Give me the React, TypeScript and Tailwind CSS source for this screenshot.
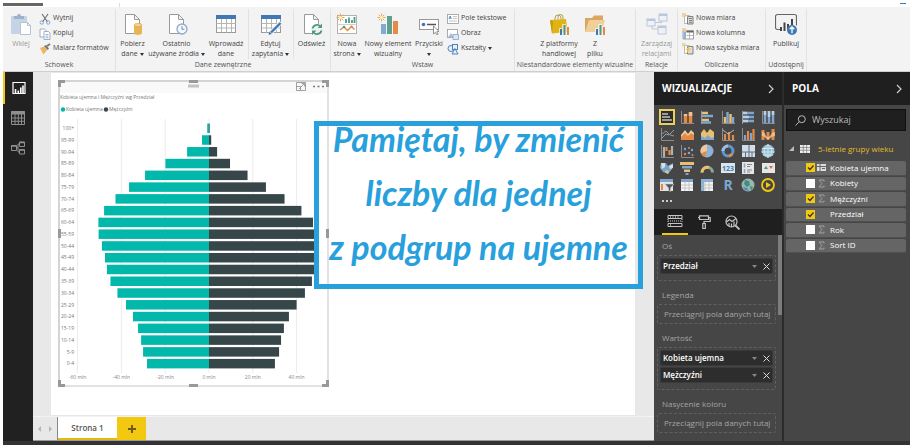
import React from 'react';

const BLUE = '#3f78b5';
const SKY = '#7ea6d0';
const ORANGE = '#e58a45';
const TEAL = '#4f9a85';
const SAND = '#e9bf72';

interface AgeGroup {
    label: string;
    women: number;
    men: number;
}

const ageGroups: AgeGroup[] = [
    { label: '100+', women: 0.8, men: 0.3 },
    { label: '95-99', women: 3.2, men: 1 },
    { label: '90-94', women: 10, men: 3.7 },
    { label: '85-89', women: 19.9, men: 9.6 },
    { label: '80-84', women: 29.2, men: 17.6 },
    { label: '75-79', women: 36.5, men: 26 },
    { label: '70-74', women: 42.7, men: 34.5 },
    { label: '65-69', women: 47.9, men: 42.2 },
    { label: '60-64', women: 50.5, men: 47.5 },
    { label: '55-59', women: 50.4, men: 49 },
    { label: '50-44', women: 48.9, men: 49 },
    { label: '45-49', women: 47.5, men: 49 },
    { label: '40-44', women: 46.6, men: 48.5 },
    { label: '35-39', women: 45, men: 47 },
    { label: '30-34', women: 41.8, men: 43.8 },
    { label: '25-29', women: 37.9, men: 40 },
    { label: '20-24', women: 34.7, men: 36.5 },
    { label: '15-19', women: 32.4, men: 34.2 },
    { label: '10-14', women: 31, men: 32.9 },
    { label: '5-9', women: 30.1, men: 32 },
    { label: '0-4', women: 28.3, men: 30.1 },
];

/* Ribbon icons, all drawn on a 22x22 grid */

const Sun = () => (
    <g stroke="#e6a94e" strokeWidth="1">
        <path d="M4.5 0.5v8M0.5 4.5h8M1.7 1.7l5.6 5.6M7.3 1.7L1.7 7.3" />
        <circle cx="4.5" cy="4.5" r="1.6" fill="#fff3d8" stroke="none" />
    </g>
);

const PageShape = () => <path d="M3.5 1.5h9l5 5v14h-14zM12.5 1.5v5h5" fill="#fff" stroke="#9a9a9a" />;

const TableShape = () => (
    <g>
        <rect x="1.5" y="2.5" width="19" height="17" fill="#fff" stroke="#9a9a9a" />
        <rect x="1" y="2" width="20" height="4" fill={BLUE} />
        <path d="M1.5 10.5h19M1.5 15h19M6.5 6v13.5M11.5 6v13.5M16.5 6v13.5" stroke="#b5b5b5" />
    </g>
);

const MiniBars = () => (
    <g>
        <rect x="12" y="16" width="2" height="6" fill={BLUE} />
        <rect x="15.5" y="12" width="2" height="10" fill={TEAL} />
        <rect x="19" y="14" width="2" height="8" fill={ORANGE} />
    </g>
);

const ribbonIcons: Record<string, React.ReactNode> = {
    paste: (
        <g>
            <rect x="1" y="3" width="16" height="18" rx="1" fill="#c5d3e6" />
            <path d="M4 6V3h3a2 2 0 0 1 4 0h3v3z" fill="#9db1cd" />
            <path d="M10.5 9.5h7l3 3v9h-10zM17.5 9.5v3h3" fill="#fff" stroke="#b8c3d2" />
        </g>
    ),
    getData: (
        <g>
            <PageShape />
            <path d="M12 12v8c0 2.6 8 2.6 8 0v-8z" fill="#e8b555" />
            <ellipse cx="16" cy="12" rx="4" ry="1.6" fill="#f5d48c" stroke="#d99f3d" strokeWidth="0.6" />
        </g>
    ),
    recent: (
        <g>
            <PageShape />
            <circle cx="16" cy="16" r="5" fill="#f6f9fc" stroke="#8fa9c8" strokeWidth="1.3" />
            <path d="M16 13v3.3h2.5" stroke="#6b8fb8" fill="none" />
        </g>
    ),
    enter: <TableShape />,
    edit: (
        <g>
            <TableShape />
            <path d="M10 20.5L21 9.5" stroke="#f3f3f3" strokeWidth="4" />
            <path d="M11 19.5L20.5 10" stroke={BLUE} strokeWidth="2.4" />
            <path d="M8.5 21.8l1-3 2.2 2.1z" fill="#38639a" />
        </g>
    ),
    refresh: (
        <g>
            <PageShape />
            <circle cx="16" cy="16.5" r="6" fill="#f3f3f3" />
            <path d="M11.5 15.5a4.6 4.6 0 0 1 8-2M20.5 17.5a4.6 4.6 0 0 1-8 2" stroke={TEAL} strokeWidth="1.8" fill="none" />
            <path d="M21 10.5v4.5h-4.5zM11 22v-4.500h4.5z" fill={TEAL} />
        </g>
    ),
    newPage: (
        <g>
            <rect x="1.5" y="2.5" width="19" height="18" fill="#fff" stroke="#b2b2b2" />
            <path d="M1.5 11.5h19" stroke="#d0d0d0" />
            <path d="M10 10V6M13 10V4.5M16 10V7M18.5 10V4" stroke={TEAL} strokeWidth="1.8" />
            <path d="M4 17l4-3 3.5 3.5 4-4 3 3" stroke={ORANGE} strokeWidth="1.5" fill="none" />
            <circle cx="8" cy="14" r="1.3" fill={TEAL} />
            <circle cx="15.5" cy="13.7" r="1.3" fill={ORANGE} />
            <Sun />
        </g>
    ),
    newVisual: (
        <g>
            <rect x="4" y="11" width="5" height="10" fill="#82abd0" />
            <rect x="10" y="3" width="5" height="18" fill="#60a08f" />
            <rect x="16" y="8" width="5" height="13" fill="#e58b49" />
            <Sun />
        </g>
    ),
    buttons: (
        <g>
            <rect x="1.5" y="6.5" width="19" height="10" fill="#fff" stroke="#999" />
            <circle cx="5.5" cy="11.5" r="1.8" fill={BLUE} />
            <path d="M9 11.5h9" stroke="#555" strokeWidth="1.5" />
            <path d="M15.5 13v8l2-1.700 1.300 2.500 1.300-.7-1.300-2.400 2.200-.3z" fill="#fff" stroke="#777" strokeWidth="0.8" />
        </g>
    ),
    market: (
        <g>
            <path d="M7 8V5a3 3 0 0 1 6 0v3M10 6.5V4a2.500 2.500 0 0 1 5 0v3" stroke="#b5a052" fill="none" />
            <path d="M2 7l16-1 1.500 13-15.500 1.500z" fill="#dfb413" />
            <path d="M2 7l3 1.500L4 20.500z" fill="#c39b0c" />
            <path d="M11 15h3v-4h4v2h4v9H11z" fill="#f3f3f3" opacity="0.7" />
            <MiniBars />
        </g>
    ),
    file: (
        <g>
            <path d="M1 19V5h7l2-2.500h9V19z" fill="#d9a760" />
            <path d="M5 7h16l-3.500 12H1z" fill="#f2cf99" />
            <path d="M11 15h3v-4h4v2h4v9H11z" fill="#f3f3f3" opacity="0.8" />
            <MiniBars />
        </g>
    ),
    relations: (
        <g fill="#eef2f7" stroke="#b9c8dc">
            <path d="M6 6v10h7M8 9.5h8V6" fill="none" stroke="#c7c7c7" />
            <rect x="13" y="1" width="8" height="7" />
            <path d="M13 2h8" strokeWidth="2" />
            <rect x="1" y="6" width="8" height="7" />
            <path d="M1 7h8" strokeWidth="2" />
            <rect x="12" y="13" width="8" height="8" />
            <path d="M12 14h8" strokeWidth="2" />
        </g>
    ),
    publish: (
        <g>
            <path d="M5 16.5H2.500a2 2 0 0 1-2-2v-11a2 2 0 0 1 2-2h17a2 2 0 0 1 2 2v9" fill="none" stroke="#666" strokeWidth="1.2" />
            <path d="M6 18v-4M9.5 18V9.5M13 16v-5M17 12V6" stroke="#444" strokeWidth="2" />
            <circle cx="17" cy="17" r="5" fill={BLUE} />
            <path d="M17 20.300v-6M14.700 16.300L17 14l2.300 2.300" stroke="#fff" strokeWidth="1.3" fill="none" />
        </g>
    ),
};

/* Small ribbon icons on a 12x12 grid */
const smallIcons: Record<string, React.ReactNode> = {
    cut: (
        <g fill="none">
            <path d="M3 1l5.500 8M9 1L3.500 9" stroke="#6e6e6e" strokeWidth="1.1" />
            <circle cx="2.8" cy="9.5" r="1.7" stroke={SKY} />
            <circle cx="9.2" cy="9.5" r="1.7" stroke={SKY} />
        </g>
    ),
    copy: (
        <g fill="#fff" stroke="#8b9cb5" strokeWidth="0.8">
            <path d="M1 1h4.500l1.500 1.500V9H1z" />
            <path d="M5 3.500h4.500L11 5v6.500H5z" />
            <path d="M6.500 6.500h3M6.500 8.200h3M6.500 9.800h3" stroke={SKY} />
        </g>
    ),
    painter: (
        <g>
            <path d="M1 5l4-1.500L8 7l-3.500 4.500z" fill="#f0b35f" />
            <path d="M5 3l2-1 3 3.500-1.500 1.500z" fill="#777" />
            <path d="M8 3l3-2" stroke="#777" strokeWidth="1.8" />
        </g>
    ),
    textBox: (
        <g>
            <rect x="0.5" y="1.5" width="11" height="9" fill="#fff" stroke="#999" strokeWidth="0.8" />
            <path d="M2 6l1.200-3 1.200 3M2.400 5h1.600" stroke={BLUE} strokeWidth="0.8" fill="none" />
            <path d="M6 3.500h4M6 5.500h4M2 8h8" stroke="#aaa" strokeWidth="0.7" />
        </g>
    ),
    image: (
        <g>
            <rect x="0.5" y="1.5" width="10" height="8" fill="#fff" stroke="#999" strokeWidth="0.8" />
            <path d="M1 9l3-4 2.500 3L8 6l2.500 3z" fill="#a9c2dd" />
            <path d="M6 6.500h5.500v5H6z" fill="#dce7f3" stroke={SKY} strokeWidth="0.8" />
        </g>
    ),
    shapes: (
        <g fill="#e7eff8" stroke={BLUE} strokeWidth="0.9">
            <circle cx="4" cy="5.5" r="3" />
            <rect x="5.5" y="1.5" width="5" height="5" />
            <path d="M8 5.500l3 5.500H5z" />
        </g>
    ),
    measure: (
        <g>
            <path d="M2.500 2.500h5v8h-5z" fill="#fff" stroke="#aaa" strokeWidth="0.8" />
            <path d="M5.500 3.500h5.500v7.500H5.500z" fill="#ddd" stroke="#777" strokeWidth="0.9" />
            <path d="M6.500 5.500h3.500M7 7.500h3M7 9.300h3" stroke="#777" strokeWidth="0.9" />
            <path d="M0 0h4v4H0z" fill="#f0c98b" opacity="0.8" />
        </g>
    ),
    column: (
        <g>
            <path d="M1 3h10.500v8H1z" fill="#fff" stroke="#888" strokeWidth="0.8" />
            <path d="M4.500 2.500h7v2h-7z" fill="#666" />
            <path d="M1.500 4h2.500v7H1.500z" fill="#8cb0d6" />
            <path d="M7.500 4v7M4.500 7.500h7" stroke="#aaa" strokeWidth="0.8" />
            <path d="M0 0h4v3.500H0z" fill="#f0c98b" opacity="0.8" />
        </g>
    ),
    quick: (
        <g>
            <path d="M2.500 2.500h5v8h-5z" fill="#fff" stroke="#aaa" strokeWidth="0.8" />
            <path d="M5.500 3.500h5.500v7.500H5.500z" fill="#ddd" stroke="#777" strokeWidth="0.9" />
            <path d="M8 2L3.500 7h2L4 11l5-5.500H6.800z" fill="#f2bf52" />
            <path d="M0 0h3.500v3.500H0z" fill="#f0c98b" opacity="0.8" />
        </g>
    ),
};

const Arrow = () => (
    <svg viewBox="0 0 4 3" className="w-1 h-[3px] fill-[#333]" aria-hidden="true">
        <path d="M0 0h4L2 3z" />
    </svg>
);

interface BigButtonProps {
    icon: string;
    lines: string[];
    width: string;
    arrow?: boolean;
    faded?: boolean;
}

const BigButton = ({ icon, lines, width, arrow, faded }: BigButtonProps) => (
    <button type="button" className={`flex flex-col items-center shrink-0 pt-1 ${width} ${faded ? 'text-[#999]' : 'text-[#444]'}`}>
        <svg viewBox="0 0 22 22" className="w-[22px] h-[22px] mb-1" aria-hidden="true">{ribbonIcons[icon]}</svg>
        {lines.map((line, i) => (
            <span key={line} className="h-2.5 leading-[10px] whitespace-nowrap flex items-center gap-0.5">
                {line}
                {arrow && i === lines.length - 1 && <Arrow />}
            </span>
        ))}
    </button>
);

const SmallButton = ({ icon, label, arrow }: { icon: string; label: string; arrow?: boolean }) => (
    <button type="button" className="flex items-center gap-0.5 h-[15px] whitespace-nowrap text-[#444]">
        <svg viewBox="0 0 12 12" className="w-3 h-3 shrink-0" aria-hidden="true">{smallIcons[icon]}</svg>
        {label}
        {arrow && <Arrow />}
    </button>
);

const Group = ({ title, width, children }: { title: string; width: string; children: React.ReactNode }) => (
    <section className={`flex flex-col shrink-0 border-r border-[#e2e2e2] ${width}`}>
        <div className="flex justify-center h-[52px]">{children}</div>
        <h2 className="text-center leading-[12px] whitespace-nowrap text-[#555]">{title}</h2>
    </section>
);

const Ribbon = () => (
    <header className="shrink-0">
        <div className="flex h-1 bg-white">
            <div className="w-10 h-[3px] bg-[#666]" />
            <div className="w-[77px] border-r border-[#ddd]" />
            <div className="w-1.5 h-px ml-auto mr-1 bg-[#3f78b5]" />
        </div>
        <div className="flex h-[65px] bg-[#f3f3f3] border-b border-[#cfcfcf] pt-0.5 text-[7px] overflow-hidden">
            <Group title="Schowek" width="w-[113px]">
                <BigButton icon="paste" lines={['Wklej']} width="w-[36px]" faded />
                <div className="flex flex-col flex-1 pt-0.5">
                    <SmallButton icon="cut" label="Wytnij" />
                    <SmallButton icon="copy" label="Kopiuj" />
                    <SmallButton icon="painter" label="Malarz formatów" />
                </div>
            </Group>
            <Group title="Dane zewnętrzne" width="w-[215px]">
                <BigButton icon="getData" lines={['Pobierz', 'dane']} width="w-8" arrow />
                <BigButton icon="recent" lines={['Ostatnio', 'używane źródła']} width="w-14" arrow />
                <BigButton icon="enter" lines={['Wprowadź', 'dane']} width="w-[43px]" />
                <div className="border-x border-[#e2e2e2]">
                    <BigButton icon="edit" lines={['Edytuj', 'zapytania']} width="w-[44px]" arrow />
                </div>
                <BigButton icon="refresh" lines={['Odśwież']} width="w-9" />
            </Group>
            <Group title="Wstaw" width="w-[184px]">
                <BigButton icon="newPage" lines={['Nowa', 'strona']} width="w-8" arrow />
                <BigButton icon="newVisual" lines={['Nowy element', 'wizualny']} width="w-[50px]" />
                <BigButton icon="buttons" lines={['Przyciski', '']} width="w-8" arrow />
                <div className="flex flex-col flex-1 pt-0.5 pl-0.5">
                    <SmallButton icon="textBox" label="Pole tekstowe" />
                    <SmallButton icon="image" label="Obraz" />
                    <SmallButton icon="shapes" label="Kształty" arrow />
                </div>
            </Group>
            <Group title="Niestandardowe elementy wizualne" width="w-[121px]">
                <BigButton icon="market" lines={['Z platformy', 'handlowej']} width="w-10" />
                <BigButton icon="file" lines={['Z', 'pliku']} width="w-8" />
            </Group>
            <Group title="Relacje" width="w-[42px]">
                <BigButton icon="relations" lines={['Zarządzaj', 'relacjami']} width="w-10" faded />
            </Group>
            <Group title="Obliczenia" width="w-[88px]">
                <div className="flex flex-col flex-1 pt-0.5 pl-1">
                    <SmallButton icon="measure" label="Nowa miara" />
                    <SmallButton icon="column" label="Nowa kolumna" />
                    <SmallButton icon="quick" label="Nowa szybka miara" />
                </div>
            </Group>
            <Group title="Udostępnij" width="w-[41px]">
                <BigButton icon="publish" lines={['Publikuj']} width="w-9" />
            </Group>
        </div>
    </header>
);

const SideRail = () => (
    <nav className="flex flex-col w-[30px] shrink-0 bg-[#212121]" aria-label="Widoki">
        <button type="button" className="flex items-center justify-center h-8 border-l-2 border-[#f2c811]" aria-label="Raport">
            <svg viewBox="0 0 14 14" className="w-3.5 h-3.5" fill="none" stroke="#fff">
                <path d="M1 12.500V1.500h12v11z" strokeWidth="1.2" />
                <path d="M3.500 12V8M6.300 12V9.500M8.800 12V6.500M11 12V4.500" strokeWidth="1.6" />
            </svg>
        </button>
        <button type="button" className="flex items-center justify-center h-7" aria-label="Dane">
            <svg viewBox="0 0 14 14" className="w-3.5 h-3.5" fill="none" stroke="#8f8f8f">
                <path d="M0.500 0.500h13v13h-13zM0.500 7h13M0.500 10.300h13M4 3v10.500M7.300 3v10.500M10.500 3v10.500" />
                <path d="M0 2h14" strokeWidth="3" />
            </svg>
        </button>
        <button type="button" className="flex items-center justify-center h-8" aria-label="Relacje">
            <svg viewBox="0 0 14 14" className="w-3.5 h-3.5" fill="none" stroke="#8f8f8f">
                <path d="M0.500 4.500h5v5h-5zM8.500 1h5v4.500h-5zM8.500 8.500h5V13h-5zM5.500 6.500h1.500V3h1.500M7 6.500V11h1.500" />
                <path d="M0.500 5h5M8.500 1.500h5M8.500 9h5" strokeWidth="1.5" />
            </svg>
        </button>
    </nav>
);

const PyramidChart = () => {
    const zero = 151;
    const unit = 2.19;
    const top = 44;
    const step = 11.77;
    return (
        <svg viewBox="0 0 271 307" className="w-[271px] h-[307px] block" role="img" aria-label="Piramida wieku">
            <rect x="1" y="1" width="268" height="12" fill="#f9f9f9" />
            <path d="M1 1h269" stroke="#d4d4d4" strokeWidth="2" />
            <path d="M1 0v306" stroke="#c6c6c6" strokeWidth="1.5" />
            <path d="M270 1v305H1" stroke="#e2e2e2" strokeWidth="2" fill="none" />
            <path d="M1.500 7V1.500H7M264 1.500h5.500V7M1.500 300v5.500H7M264 305.500h5.500V300" stroke="#999" strokeWidth="3" fill="none" />
            <path d="M131 1.500h9M131 305.500h9M1.500 149v9M269.500 149v9" stroke="#999" strokeWidth="3" />
            <path d="M130 6h11" stroke="#c2c2c2" strokeWidth="3" />
            {/* focus mode + more options */}
            <path d="M238.500 2.500h9v8h-9zM241 9l5-5M243.500 3.500h3v3M238.500 6.500h4v4" stroke="#8a8a8a" fill="none" strokeWidth="0.8" />
            <path d="M255 6.500h2M259.500 6.500h2M264 6.500h2" stroke="#777" strokeWidth="1.5" />
            <text x="2" y="19" className="text-[5px] fill-[#777]">Kobieta ujemna i Mężczyźni wg Przedział</text>
            <circle cx="5" cy="29.5" r="2.2" fill="#01b8aa" />
            <text x="8" y="31" className="text-[5px] fill-[#777]">Kobieta ujemna</text>
            <circle cx="48" cy="29.5" r="2.2" fill="#374649" />
            <text x="51" y="31" className="text-[5px] fill-[#777]">Mężczyźni</text>
            {[-60, -40, -20, 0, 20, 40].map((tick) => (
                <g key={tick}>
                    <path d={`M${zero + tick * unit} 39v254`} stroke="#ececec" />
                    <text x={zero + tick * unit} y="299" textAnchor="middle" className="text-[5px] fill-[#888]">{`${tick} mln`}</text>
                </g>
            ))}
            {ageGroups.map((g, i) => (
                <g key={g.label}>
                    <text x="16" y={top + i * step + 6} textAnchor="end" className="text-[5px] fill-[#777]">{g.label}</text>
                    <rect x={zero - g.women * unit} y={top + i * step - 0.5} width={g.women * unit} height="9.5" fill="#01b8aa" />
                    <rect x={zero} y={top + i * step - 0.5} width={g.men * unit} height="9.5" fill="#374649" />
                </g>
            ))}
        </svg>
    );
};

const Canvas = () => (
    <main className="flex flex-col flex-1 min-w-0 bg-[#e8e8e8]">
        <div className="relative flex-1 ml-[18px] mr-[19px] mt-px bg-white pl-[7px] pt-[7px]">
            <PyramidChart />
            <p className="absolute left-[263px] top-[48px] w-[329px] h-[168px] border-5 border-[#27a0dc] text-[#27a0dc] font-['Lato'] font-bold italic text-[34px] leading-[54px] text-center whitespace-nowrap">
                <span className="block -mt-3.5">Pamiętaj, by zmienić</span>
                <span className="block">liczby dla jednej</span>
                <span className="block">z podgrup na ujemne</span>
            </p>
        </div>
        <div className="flex h-[25px] shrink-0 mt-px text-[8px] border-t border-[#f3f3f3] border-b border-b-[#999]">
            <div className="flex items-center justify-center gap-2 w-[25px] border-r border-[#888]">
                <svg viewBox="0 0 3 6" className="w-[3px] h-1.5 fill-[#b5b5b5]"><path d="M3 0v6L0 3z" /></svg>
                <svg viewBox="0 0 3 6" className="w-[3px] h-1.5 fill-[#b5b5b5]"><path d="M0 0v6l3-3z" /></svg>
            </div>
            <button type="button" className="w-[59px] bg-white border-b-2 border-[#e8b90a] text-[#555] font-semibold">Strona 1</button>
            <button type="button" className="flex items-center justify-center w-[29px] bg-[#f2c811]" aria-label="Nowa strona">
                <svg viewBox="0 0 8 8" className="w-2 h-2" stroke="#6b5b1c" strokeWidth="2"><path d="M4 0v8M0 4h8" /></svg>
            </button>
        </div>
    </main>
);

/* Visual gallery icons on a 14x14 grid */
const Axis = () => <path d="M1.500 1v12.500H14" stroke="#8d8d8d" fill="none" />;

const galleryIcons: { name: string; art: React.ReactNode }[] = [
    { name: 'Skumulowany słupkowy', art: <path d="M2 4h6M2 7h8M2 10h10" stroke="#9a9a9a" strokeWidth="2" /> },
    { name: 'Skumulowany kolumnowy', art: <g><Axis /><path d="M5.500 13V6M10.500 13V3" stroke={ORANGE} strokeWidth="3.5" /><path d="M5.500 6V4M10.500 6V2" stroke="#f2c08f" strokeWidth="3.5" /></g> },
    { name: 'Grupowany słupkowy', art: <g><path d="M1.500 1v13" stroke="#999" /><path d="M2 3h6M2 10h7" stroke={SAND} strokeWidth="2.5" /><path d="M2 6h11M2 12.500h9" stroke={SKY} strokeWidth="2.5" /></g> },
    { name: 'Grupowany kolumnowy', art: <g><Axis /><path d="M4 13V7M9.500 13V4" stroke={SAND} strokeWidth="2.5" /><path d="M6.500 13V2M12 13V7" stroke={SKY} strokeWidth="2.5" /></g> },
    { name: 'Słupkowy 100%', art: <g><path d="M1.500 1v13" stroke="#999" /><path d="M2 3h11M2 7h11M2 11h11" stroke={SKY} strokeWidth="2.5" /><path d="M2 3h4M2 7h6M2 11h5" stroke="#b8cfe6" strokeWidth="2.5" /></g> },
    { name: 'Kolumnowy 100%', art: <g><Axis /><path d="M4 13V1M8 13V1M12 13V1" stroke={SKY} strokeWidth="2.5" /><path d="M4 5V1M8 7V1M12 5V1" stroke="#b8cfe6" strokeWidth="2.5" /></g> },
    { name: 'Liniowy', art: <g fill="none"><Axis /><path d="M2 11l4-4 3 1 5-5" stroke={SKY} /><path d="M2 7l4-3 4 4 4 1" stroke="#a99777" /></g> },
    { name: 'Warstwowy', art: <g><path d="M1 13V8l4-5 3 4 3-4 3 3v7z" fill="#f0cda0" /><path d="M1 13v-3l4-4 3 3 3-3 3 2v5z" fill={ORANGE} /></g> },
    { name: 'Skumulowany warstwowy', art: <g><path d="M1 13V7l4 2 3-2 3 2 3-3v7z" fill={SKY} /><path d="M1 6l3-4 3 4 3-4 4 3v5l-3 1-3-3-3 3-4-2z" fill={SAND} /></g> },
    { name: 'Liniowy i kolumnowy', art: <g><Axis /><path d="M4 13V7M8 13V5M12 13V8" stroke={ORANGE} strokeWidth="2.2" /><path d="M2 3l5 4 6-4" stroke="#b8b8b8" fill="none" /></g> },
    { name: 'Liniowy i grupowany', art: <g><Axis /><path d="M4 13V8M10 13V6" stroke={SKY} strokeWidth="2.2" /><path d="M7 13V4M12.500 13V2" stroke={ORANGE} strokeWidth="2.2" /></g> },
    { name: 'Wstążkowy', art: <g><path d="M2 13V3M7 13V5M12 13V2" stroke={ORANGE} strokeWidth="3" /><path d="M1 5c4 0 3 5 6 5s3-5 7-5v4c-4 0-4 3-7 3s-3-3-6-3z" fill="#f0c99c" opacity="0.8" /></g> },
    { name: 'Kaskadowy', art: <g><Axis /><path d="M4 13V3M12 11V2" stroke="#b0b0b0" strokeWidth="2.2" /><path d="M6.500 7V3M9.500 11V6" stroke={ORANGE} strokeWidth="2.2" /></g> },
    { name: 'Punktowy', art: <g><Axis /><g fill={SKY}><circle cx="5" cy="5" r="1.2" /><circle cx="9" cy="9" r="1.3" /><circle cx="12" cy="6" r="1.2" /></g><g fill={ORANGE}><circle cx="5" cy="10" r="1.2" /><circle cx="9" cy="4" r="1" /><circle cx="12.5" cy="11" r="1" /></g></g> },
    { name: 'Kołowy', art: <g><circle cx="7" cy="7" r="6.5" fill="#8fb2d8" /><path d="M7 7V0.500A6.500 6.500 0 0 0 1 9.500z" fill="#f0c796" /><path d="M7 7l-6 2.500A6.500 6.500 0 0 0 5 13z" fill={ORANGE} /></g> },
    { name: 'Pierścieniowy', art: <g fill="none" strokeWidth="3"><circle cx="7" cy="7" r="5" stroke="#5f97ce" /><path d="M2 7a5 5 0 0 1 5-5" stroke="#9dbede" /><path d="M11 10a5 5 0 0 1-3 2" stroke={ORANGE} /></g> },
    { name: 'Mapa drzewa', art: <g><path d="M1 1h13v12H1z" fill="#d3dde8" /><path d="M8 1v12M1 8h13M11 8v5M4.500 8v5" stroke="#5a6e85" /></g> },
    { name: 'Mapa', art: <g><circle cx="7" cy="7" r="6.5" fill="#8db9cf" /><path d="M7 0.500v13M1 4.500h12M0.500 8h13M2 11h10M7 0.500c-5 4-5 9 0 13M7 0.500c5 4 5 9 0 13" stroke="#e2f0f3" fill="none" strokeWidth="0.8" /></g> },
    { name: 'Kartogram', art: <g><path d="M1 2h5l2 3 5-3-1 6-4 5-5-2-3-4z" fill="#76a6cf" /><path d="M1 2h4v4L2 8zM9 5l4-2v4l-3 1z" fill="#ddd" /><path d="M6 9l3 1-1 3-3-2z" fill={SAND} /></g> },
    { name: 'Lejek', art: <g><path d="M0 1h14v3H0z" fill={SAND} /><path d="M2 5h10v2.500H2z" fill={SKY} /><path d="M4 8.500h6V11H4z" fill={SAND} /><path d="M5.500 12h3v2h-3z" fill={SKY} /></g> },
    { name: 'Miernik', art: <g fill="none" strokeWidth="3"><path d="M2 11.500a5.200 5.200 0 0 1 10.500 0" stroke="#8fa98e" /><path d="M2 11.500a5.200 5.200 0 0 1 7-5" stroke={SAND} /></g> },
    { name: 'Karta', art: <g><path d="M0 2h14v10H0z" fill="#d9e5ef" /><text x="7" y="9.5" textAnchor="middle" className="text-[7px] font-bold fill-[#4c7fae]">123</text></g> },
    { name: 'Karta z wieloma wierszami', art: <g><path d="M1 1h12v12H1z" fill="#e6e6e6" /><path d="M3.500 2.500v4M3.500 8v4" stroke={SKY} strokeWidth="1.5" /><path d="M6 3.500h5M6 5.500h3M6 9h5M6 11h3" stroke="#888" /></g> },
    { name: 'KPI', art: <g><path d="M1 2h13v10H1z" fill="#e6e6e6" /><path d="M3 8l2-3 2 3z" fill="#4b9a70" /><path d="M8 5h4l-2 3z" fill="#d66c4a" /></g> },
    { name: 'Fragmentator', art: <g><path d="M0 1h13v12H0z" fill="#e4e4e4" /><path d="M0 1h13v3H0z" fill={SKY} /><path d="M2 6v6" stroke={ORANGE} strokeWidth="2" /><path d="M5 6h9l-3.500 4v3.500l-2-1V10z" fill="#555" stroke="#ccc" strokeWidth="0.6" /></g> },
    { name: 'Tabela', art: <g><path d="M1 1h12v12H1z" fill="#f3f3f3" /><path d="M1 1h12v3H1z" fill={SKY} /><path d="M5 4v9M9 4v9M1 7h12M1 10h12" stroke="#b7b7b7" strokeWidth="0.7" /></g> },
    { name: 'Macierz', art: <g><path d="M1 1h12v12H1z" fill="#f3f3f3" /><path d="M1 1h12v3H1zM1 4h3v9H1z" fill="#8cb0d6" /><path d="M5 4v9M9 4v9M1 7h12M1 10h12" stroke="#b7b7b7" strokeWidth="0.7" /></g> },
    { name: 'Skrypt R', art: <text x="7" y="12" textAnchor="middle" className="text-[14px] font-bold fill-[#7ea6d0]">R</text> },
    { name: 'ArcGIS', art: <g><circle cx="7" cy="7" r="6.5" fill="#9bb5b5" /><path d="M4 2l4 1 1 4-3 2-3-3zM9 8l3 1-2 4z" fill="#3d9277" /><path d="M2 9l4 1 2 3-4-1z" fill="#5285bd" /></g> },
    { name: 'Odtwarzanie', art: <g><circle cx="7" cy="7" r="6" fill="none" stroke="#f2c811" strokeWidth="1.8" /><path d="M5 4v6l5-3z" fill="#f2c811" /></g> },
];

const PanelHeader = ({ title }: { title: string }) => (
    <div className="flex items-center justify-between h-[33px] shrink-0 bg-[#1f1f1f] px-2">
        <h2 className="text-[10px] font-bold text-white">{title}</h2>
        <svg viewBox="0 0 6 10" className="w-1.5 h-2.5" fill="none" stroke="#ccc" strokeWidth="1.2"><path d="M1 1l4 4-4 4" /></svg>
    </div>
);

const FieldPill = ({ name }: { name: string }) => (
    <div className="flex items-center gap-1.5 h-4 rounded-xs bg-[#2d2d2d] border border-[#3a3a3a] px-0.5 text-white font-semibold">
        <span className="flex-1 whitespace-nowrap">{name}</span>
        <svg viewBox="0 0 5 3" className="w-[5px] h-[3px] fill-[#888]"><path d="M0 0h5L2.500 3z" /></svg>
        <button type="button" aria-label={`Usuń ${name}`}>
            <svg viewBox="0 0 7 7" className="w-[7px] h-[7px]" stroke="#ddd"><path d="M0.500 0.500l6 6M6.500 0.500l-6 6" /></svg>
        </button>
    </div>
);

const Well = ({ title, fields }: { title: string; fields: string[] }) => (
    <div className="text-[8px]">
        <h3 className="h-[19px] leading-[19px] pl-[5px] text-[#a5a5a5]">{title}</h3>
        <div className={`border border-dashed border-[#606060] rounded-xs mb-1 ${fields.length ? 'p-0.5 pb-1.5 space-y-px' : 'h-5'}`}>
            {fields.length ? (
                fields.map((f) => <FieldPill key={f} name={f} />)
            ) : (
                <p className="pl-1.5 leading-[18px] whitespace-nowrap text-[#a5a5a5]">Przeciągnij pola danych tutaj</p>
            )}
        </div>
    </div>
);

const VisualizationsPanel = () => (
    <aside className="flex flex-col w-32 shrink-0 bg-[#464646]">
        <PanelHeader title="WIZUALIZACJE" />
        <div className="grid grid-cols-6 gap-y-px pt-1 pl-[3px] pr-1">
            {galleryIcons.map((icon, i) => (
                <button
                    key={icon.name}
                    type="button"
                    title={icon.name}
                    className={`flex items-center justify-center h-4 w-4 mx-auto ${i === 0 ? 'bg-[#2d2d2d] border-2 border-[#e9cf5c]' : ''}`}
                >
                    <svg viewBox="0 0 14 14" className="w-3.5 h-3.5 shrink-0 overflow-visible">{icon.art}</svg>
                </button>
            ))}
        </div>
        <button type="button" className="flex items-center gap-0.5 h-4 pl-2" aria-label="Więcej opcji">
            <span className="w-0.5 h-0.5 bg-[#ccc]" />
            <span className="w-0.5 h-0.5 bg-[#ccc]" />
            <span className="w-0.5 h-0.5 bg-[#ccc]" />
        </button>
        <div className="flex h-[26px] shrink-0 bg-[#1f1f1f] pl-2 gap-1">
            <button type="button" className="flex items-center justify-center w-[26px] border-b-2 border-[#f2c811]" aria-label="Pola">
                <svg viewBox="0 0 16 14" className="w-4 h-3.5" fill="none" stroke="#c4c4c4">
                    <path d="M1 1.500h14v3H1zM1 9.500h14v3H1z" />
                    <path d="M1 7h14M1 5v4M15 5v4" strokeDasharray="1 1" />
                    <path d="M3.500 2v2M6 2v2M8.500 2v2M11 2v2M3.500 10v2" strokeWidth="0.7" />
                </svg>
            </button>
            <button type="button" className="flex items-center justify-center w-6" aria-label="Formatuj">
                <svg viewBox="0 0 14 14" className="w-3.5 h-3.5" fill="none" stroke="#c4c4c4" strokeWidth="1.2">
                    <path d="M2.500 0.800h9v3.700h-9zM11.500 2.500h1.700v4H7v2M5.800 8.500h2.500v5H5.800zM2.500 2.500H1" />
                </svg>
            </button>
            <button type="button" className="flex items-center justify-center w-6" aria-label="Analiza">
                <svg viewBox="0 0 15 15" className="w-[15px] h-[15px]" fill="none" stroke="#c4c4c4" strokeWidth="1.2">
                    <circle cx="6.5" cy="6.5" r="5.5" />
                    <path d="M10.500 10.500l4 4" strokeWidth="1.8" />
                    <path d="M1.500 7l3-2.500 2.500 2 4-3M4 11V8M6.500 12V8.500M9 11V6.500" />
                </svg>
            </button>
        </div>
        <div className="flex flex-1">
            <div className="flex-1 min-w-0 pt-px pl-[3px] pr-0.5">
                <Well title="Oś" fields={['Przedział']} />
                <Well title="Legenda" fields={[]} />
                <Well title="Wartość" fields={['Kobieta ujemna', 'Mężczyźni']} />
                <Well title="Nasycenie koloru" fields={[]} />
            </div>
            <div className="w-1 h-20 bg-[#7d7d7d]" />
        </div>
    </aside>
);

const fields = [
    { name: 'Kobieta ujemna', checked: true, icon: 'calc' },
    { name: 'Kobiety', checked: false, icon: 'sum' },
    { name: 'Mężczyźni', checked: true, icon: 'sum' },
    { name: 'Przedział', checked: true, icon: '' },
    { name: 'Rok', checked: false, icon: 'sum' },
    { name: 'Sort ID', checked: false, icon: 'sum' },
];

const FieldsPanel = () => (
    <aside className="flex flex-col w-32 shrink-0 bg-[#464646] border-l-2 border-[#2b2b2b] text-[8px] text-white">
        <PanelHeader title="POLA" />
        <label className="flex items-center gap-1.5 h-[22px] mt-1 ml-0.5 mr-1 bg-[#1f1f1f] border border-[#111] pl-2">
            <svg viewBox="0 0 11 11" className="w-[11px] h-[11px] shrink-0" fill="none" stroke="#bbb">
                <circle cx="6.8" cy="4.2" r="3.5" />
                <path d="M4.200 6.800L0.500 10.500" />
            </svg>
            <input type="text" placeholder="Wyszukaj" aria-label="Wyszukaj" className="w-full min-w-0 text-[9px] placeholder-[#bbb] outline-none" />
        </label>
        <div className="flex items-center h-[29px] pl-[5px] pt-1.5 text-[#e3bc2a] whitespace-nowrap">
            <svg viewBox="0 0 5 5" className="w-[5px] h-[5px] mr-1.5 fill-[#bbb]"><path d="M5 0v5H0z" /></svg>
            <svg viewBox="0 0 10 8" className="w-2.5 h-2 mr-2"><path d="M0 0h10v8H0z" fill="#eee" /><path d="M0 2.500h10M0 5.200h10M3.300 0v8M6.600 0v8" stroke="#777" strokeWidth="0.7" /></svg>
            5-letnie grupy wieku
        </div>
        <ul className="grid grid-rows-6 h-[92px] gap-y-px mt-px ml-0.5 mr-1">
            {fields.map((f) => (
                <li key={f.name} className="flex bg-[#656565] border-b border-[#505050] rounded-xs">
                    <label className="flex items-center flex-1 pl-5 whitespace-nowrap leading-[12px]">
                        <span className="relative flex">
                            <input type="checkbox" defaultChecked={f.checked} className="peer appearance-none w-[9px] h-[9px] bg-white checked:bg-[#f2c811]" />
                            <svg viewBox="0 0 9 9" className="absolute inset-0 w-[9px] h-[9px] hidden peer-checked:block pointer-events-none" fill="none" stroke="#333" strokeWidth="1.2"><path d="M2 4.500l2 2L7.500 2.500" /></svg>
                        </span>
                        <svg viewBox="0 0 9 9" className="w-[9px] h-[9px] ml-0.5 mr-1" fill="none">
                            {f.icon === 'sum' && <path d="M7 2.500V1H2l3 3.500L2 8h5V6.500" stroke="#a0a0a0" />}
                            {f.icon === 'calc' && <g><path d="M0 1h9v7H0z" fill="#ddd" /><path d="M0 3.500h9M3 1v7M5 5.500h3" stroke="#666" /></g>}
                        </svg>
                        {f.name}
                    </label>
                </li>
            ))}
        </ul>
    </aside>
);

const App = () => (
    <div className="min-h-screen flex flex-col bg-white p-[3px] pr-0.5 font-['Open_Sans','Noto_Sans',sans-serif]">
        <Ribbon />
        <div className="flex flex-1">
            <SideRail />
            <Canvas />
            <VisualizationsPanel />
            <FieldsPanel />
        </div>
        <footer className="h-1 shrink-0 bg-[#333]" />
    </div>
);

export default App;
